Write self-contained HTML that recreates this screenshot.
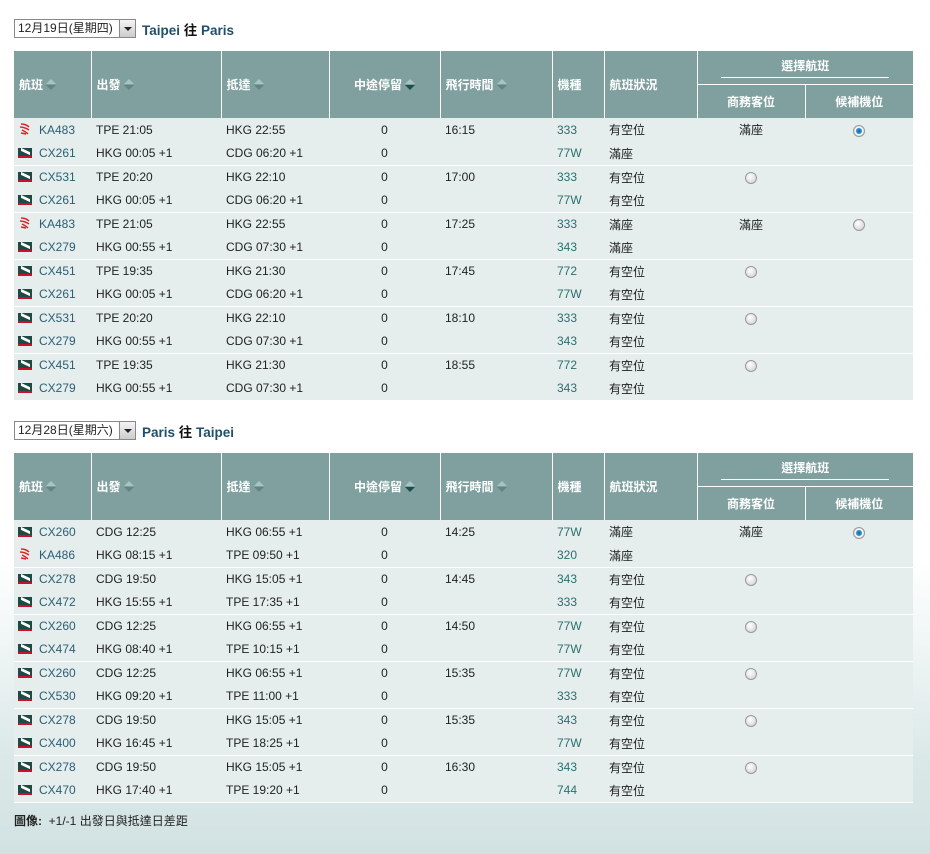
<!DOCTYPE html>
<html><head><meta charset="utf-8">
<style>
*{margin:0;padding:0;box-sizing:border-box}
html,body{width:930px;height:854px;overflow:hidden}
body{font-family:"Liberation Sans","Noto Sans CJK TC",sans-serif;font-size:12px;color:#222;
background:linear-gradient(#fff 0px,#fff 560px,#dbe8e8 760px,#d2e2e2 854px);position:relative}
.sel{position:absolute;left:14px;height:19px;border:1px solid #888;background:#fff;font-size:12px;line-height:17px;padding-left:3px;width:122px}
.sel b{position:absolute;right:0;top:0;width:16px;height:17px;border-left:1px solid #888;background:linear-gradient(#f4f4f4,#ccc)}
.sel b:after{content:"";position:absolute;left:4px;top:7px;border-left:4px solid transparent;border-right:4px solid transparent;border-top:4px solid #222}
.ttl{position:absolute;left:142px;font-size:13.5px;font-weight:bold;color:#1f4f6a}
.ttl i{font-style:normal;color:#111}
table{position:absolute;left:14px;border-collapse:collapse;table-layout:fixed;width:899px}
th{background:#80a0a0;color:#fff;font-size:12px;font-weight:bold;text-align:left;padding-left:5px;border-left:1px solid #fff;border-right:1px solid #fff;height:33px}
th.c{text-align:center;padding-left:0}
th .ar{display:inline-block;width:10px;height:12px;vertical-align:-2px;margin-left:3px;position:relative}
th .ar:before{content:"";position:absolute;left:0;top:0;border-left:5px solid transparent;border-right:5px solid transparent;border-bottom:5px solid #a9c3c3}
th .ar:after{content:"";position:absolute;left:0;top:6px;border-left:5px solid transparent;border-right:5px solid transparent;border-top:5px solid #5f8585}
th .ar.d:after{border-top-color:#1d4d4d}
th .sub{display:block;width:168px;margin:0 auto;border-bottom:1px solid #fff;padding-bottom:3px}
td{background:#e5eded;height:23.5px;padding-left:5px;white-space:nowrap;color:#222}
tr.e td{border-bottom:1px solid #fff}
td.f{padding-left:4px;color:#2b5f73}
td.c{text-align:center;padding-left:0}
td.a{color:#2a7070}
.cx{display:inline-block;width:14px;height:10px;background:#1e4a44;border-bottom:2px solid #c8102e;vertical-align:-1px;margin-right:7px;position:relative;overflow:hidden}
.cx:after{content:"";position:absolute;left:3px;top:2px;width:9px;height:3px;background:#fff;transform:skewY(25deg)}
.ka{display:inline-block;width:14px;height:12px;vertical-align:-1px;margin-right:7px}
.r{display:inline-block;width:12px;height:12px;border-radius:50%;border:1px solid #999;background:radial-gradient(circle at 40% 35%,#fff,#ccc);vertical-align:middle}
.r.s{background:radial-gradient(circle,#1a6fb0 0,#2a8ad0 2.5px,#fff 3.5px,#ccc 6px)}
.fn{position:absolute;left:14px;top:812px;font-size:12px}
</style></head><body>

<div class="sel" style="top:19px">12月19日(星期四)<b></b></div>
<div class="ttl" style="top:19px">Taipei <i>往</i> Paris</div>

<table style="top:51px">
<colgroup><col style="width:77px"><col style="width:130px"><col style="width:108px"><col style="width:111px"><col style="width:112px"><col style="width:52px"><col style="width:93px"><col style="width:108px"><col style="width:108px"></colgroup>
<tr><th rowspan="2" style="border-left:0">航班<span class="ar"></span></th><th rowspan="2">出發<span class="ar"></span></th><th rowspan="2">抵達<span class="ar"></span></th><th rowspan="2" class="c">中途停留<span class="ar d"></span></th><th rowspan="2">飛行時間<span class="ar"></span></th><th rowspan="2">機種</th><th rowspan="2">航班狀況</th><th colspan="2" class="c" style="border-right:0"><span class="sub">選擇航班</span></th></tr>
<tr><th class="c" style="height:34px;border-top:1px solid #fff">商務客位</th><th class="c" style="height:34px;border-top:1px solid #fff;border-right:0">候補機位</th></tr>
<tr><td class="f"><svg class="ka" viewBox="0 0 14 12"><path d="M3 1c3 0 6 1 8 3M2 4c3 0 6 1 9 3M4 7c2 1 4 2 6 4M3 10l5 1" stroke="#d8232a" stroke-width="1.5" fill="none"/></svg>KA483</td><td>TPE 21:05</td><td>HKG 22:55</td><td class="c">0</td><td>16:15</td><td class="a">333</td><td>有空位</td><td class="c">滿座</td><td class="c"><span class="r s"></span></td></tr>
<tr class="e"><td class="f"><span class="cx"></span>CX261</td><td>HKG 00:05 +1</td><td>CDG 06:20 +1</td><td class="c">0</td><td></td><td class="a">77W</td><td>滿座</td><td></td><td></td></tr>
<tr><td class="f"><span class="cx"></span>CX531</td><td>TPE 20:20</td><td>HKG 22:10</td><td class="c">0</td><td>17:00</td><td class="a">333</td><td>有空位</td><td class="c"><span class="r"></span></td><td></td></tr>
<tr class="e"><td class="f"><span class="cx"></span>CX261</td><td>HKG 00:05 +1</td><td>CDG 06:20 +1</td><td class="c">0</td><td></td><td class="a">77W</td><td>有空位</td><td></td><td></td></tr>
<tr><td class="f"><svg class="ka" viewBox="0 0 14 12"><path d="M3 1c3 0 6 1 8 3M2 4c3 0 6 1 9 3M4 7c2 1 4 2 6 4M3 10l5 1" stroke="#d8232a" stroke-width="1.5" fill="none"/></svg>KA483</td><td>TPE 21:05</td><td>HKG 22:55</td><td class="c">0</td><td>17:25</td><td class="a">333</td><td>滿座</td><td class="c">滿座</td><td class="c"><span class="r"></span></td></tr>
<tr class="e"><td class="f"><span class="cx"></span>CX279</td><td>HKG 00:55 +1</td><td>CDG 07:30 +1</td><td class="c">0</td><td></td><td class="a">343</td><td>滿座</td><td></td><td></td></tr>
<tr><td class="f"><span class="cx"></span>CX451</td><td>TPE 19:35</td><td>HKG 21:30</td><td class="c">0</td><td>17:45</td><td class="a">772</td><td>有空位</td><td class="c"><span class="r"></span></td><td></td></tr>
<tr class="e"><td class="f"><span class="cx"></span>CX261</td><td>HKG 00:05 +1</td><td>CDG 06:20 +1</td><td class="c">0</td><td></td><td class="a">77W</td><td>有空位</td><td></td><td></td></tr>
<tr><td class="f"><span class="cx"></span>CX531</td><td>TPE 20:20</td><td>HKG 22:10</td><td class="c">0</td><td>18:10</td><td class="a">333</td><td>有空位</td><td class="c"><span class="r"></span></td><td></td></tr>
<tr class="e"><td class="f"><span class="cx"></span>CX279</td><td>HKG 00:55 +1</td><td>CDG 07:30 +1</td><td class="c">0</td><td></td><td class="a">343</td><td>有空位</td><td></td><td></td></tr>
<tr><td class="f"><span class="cx"></span>CX451</td><td>TPE 19:35</td><td>HKG 21:30</td><td class="c">0</td><td>18:55</td><td class="a">772</td><td>有空位</td><td class="c"><span class="r"></span></td><td></td></tr>
<tr class="e"><td class="f"><span class="cx"></span>CX279</td><td>HKG 00:55 +1</td><td>CDG 07:30 +1</td><td class="c">0</td><td></td><td class="a">343</td><td>有空位</td><td></td><td></td></tr>
</table>

<div class="sel" style="top:421px">12月28日(星期六)<b></b></div>
<div class="ttl" style="top:421px">Paris <i>往</i> Taipei</div>

<table style="top:453px">
<colgroup><col style="width:77px"><col style="width:130px"><col style="width:108px"><col style="width:111px"><col style="width:112px"><col style="width:52px"><col style="width:93px"><col style="width:108px"><col style="width:108px"></colgroup>
<tr><th rowspan="2" style="border-left:0">航班<span class="ar"></span></th><th rowspan="2">出發<span class="ar"></span></th><th rowspan="2">抵達<span class="ar"></span></th><th rowspan="2" class="c">中途停留<span class="ar d"></span></th><th rowspan="2">飛行時間<span class="ar"></span></th><th rowspan="2">機種</th><th rowspan="2">航班狀況</th><th colspan="2" class="c" style="border-right:0"><span class="sub">選擇航班</span></th></tr>
<tr><th class="c" style="height:34px;border-top:1px solid #fff">商務客位</th><th class="c" style="height:34px;border-top:1px solid #fff;border-right:0">候補機位</th></tr>
<tr><td class="f"><span class="cx"></span>CX260</td><td>CDG 12:25</td><td>HKG 06:55 +1</td><td class="c">0</td><td>14:25</td><td class="a">77W</td><td>滿座</td><td class="c">滿座</td><td class="c"><span class="r s"></span></td></tr>
<tr class="e"><td class="f"><svg class="ka" viewBox="0 0 14 12"><path d="M3 1c3 0 6 1 8 3M2 4c3 0 6 1 9 3M4 7c2 1 4 2 6 4M3 10l5 1" stroke="#d8232a" stroke-width="1.5" fill="none"/></svg>KA486</td><td>HKG 08:15 +1</td><td>TPE 09:50 +1</td><td class="c">0</td><td></td><td class="a">320</td><td>滿座</td><td></td><td></td></tr>
<tr><td class="f"><span class="cx"></span>CX278</td><td>CDG 19:50</td><td>HKG 15:05 +1</td><td class="c">0</td><td>14:45</td><td class="a">343</td><td>有空位</td><td class="c"><span class="r"></span></td><td></td></tr>
<tr class="e"><td class="f"><span class="cx"></span>CX472</td><td>HKG 15:55 +1</td><td>TPE 17:35 +1</td><td class="c">0</td><td></td><td class="a">333</td><td>有空位</td><td></td><td></td></tr>
<tr><td class="f"><span class="cx"></span>CX260</td><td>CDG 12:25</td><td>HKG 06:55 +1</td><td class="c">0</td><td>14:50</td><td class="a">77W</td><td>有空位</td><td class="c"><span class="r"></span></td><td></td></tr>
<tr class="e"><td class="f"><span class="cx"></span>CX474</td><td>HKG 08:40 +1</td><td>TPE 10:15 +1</td><td class="c">0</td><td></td><td class="a">77W</td><td>有空位</td><td></td><td></td></tr>
<tr><td class="f"><span class="cx"></span>CX260</td><td>CDG 12:25</td><td>HKG 06:55 +1</td><td class="c">0</td><td>15:35</td><td class="a">77W</td><td>有空位</td><td class="c"><span class="r"></span></td><td></td></tr>
<tr class="e"><td class="f"><span class="cx"></span>CX530</td><td>HKG 09:20 +1</td><td>TPE 11:00 +1</td><td class="c">0</td><td></td><td class="a">333</td><td>有空位</td><td></td><td></td></tr>
<tr><td class="f"><span class="cx"></span>CX278</td><td>CDG 19:50</td><td>HKG 15:05 +1</td><td class="c">0</td><td>15:35</td><td class="a">343</td><td>有空位</td><td class="c"><span class="r"></span></td><td></td></tr>
<tr class="e"><td class="f"><span class="cx"></span>CX400</td><td>HKG 16:45 +1</td><td>TPE 18:25 +1</td><td class="c">0</td><td></td><td class="a">77W</td><td>有空位</td><td></td><td></td></tr>
<tr><td class="f"><span class="cx"></span>CX278</td><td>CDG 19:50</td><td>HKG 15:05 +1</td><td class="c">0</td><td>16:30</td><td class="a">343</td><td>有空位</td><td class="c"><span class="r"></span></td><td></td></tr>
<tr class="e"><td class="f"><span class="cx"></span>CX470</td><td>HKG 17:40 +1</td><td>TPE 19:20 +1</td><td class="c">0</td><td></td><td class="a">744</td><td>有空位</td><td></td><td></td></tr>
</table>

<div class="fn"><b>圖像:</b>&nbsp; +1/-1 出發日與抵達日差距</div>
</body></html>
